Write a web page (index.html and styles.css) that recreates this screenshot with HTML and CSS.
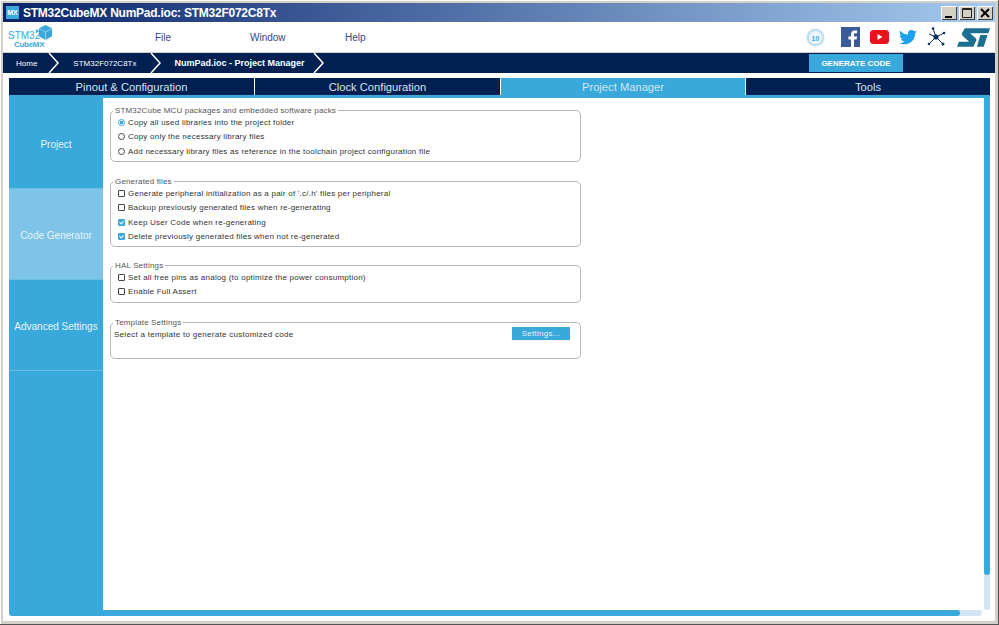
FILE: index.html
```html
<!DOCTYPE html>
<html>

  <head>
    <meta charset="UTF-8">
    <title>STM32CubeMX NumPad.ioc: STM32F072C8Tx</title>
    <link rel="stylesheet" href="styles.css">
  </head>

  <body>
    <div class="window">
      <div class="titleBar">
        <span class="appIcon">MX</span>
        <span class="titleText">STM32CubeMX NumPad.ioc: STM32F072C8Tx</span>
        <div class="winButtons">
          <span class="winBtn"><svg width="16" height="14"><rect x="4" y="10" width="7" height="2" fill="#000"/></svg></span>
          <span class="winBtn"><svg width="16" height="14"><path d="M3.5 2.5h9v9h-9z M3.5 3.5h9" fill="none" stroke="#222"/></svg></span>
          <span class="winBtn winClose"><svg width="16" height="14"><path d="M4 3l8 8M12 3l-8 8" stroke="#000" stroke-width="2"/></svg></span>
        </div>
      </div>

      <div class="menuBar">
        <div class="logo">
          <div class="logoText"><span class="logoStm">STM32</span><span class="logoCube">CubeMX</span></div>
          <svg class="logoIcon" width="15" height="17" viewBox="0 0 16 18">
            <path d="M8 1l7 3.500v8.500l-7 4-7-4v-8.500z" fill="#3aa8dc"/>
            <path d="M1 4.500l7 4 7-4M8 8.500v8.500" fill="none" stroke="#bfe3f5" stroke-width=".7"/>
            <path d="M-4 7l2-.5 1-1.500.5 1.500 1.500.5-1.500.5-.5 1.500-1-1.500z" fill="#3aa8dc"/>
          </svg>
        </div>
        <div class="menus">
          <span class="menuItem">File</span>
          <span class="menuItem">Window</span>
          <span class="menuItem">Help</span>
        </div>
        <div class="social">
          <svg class="badge" width="19" height="19" viewBox="0 0 19 19">
            <circle cx="9.500" cy="9.500" r="9" fill="#bfe0f3"/>
            <circle cx="9.500" cy="9.500" r="6.500" fill="#eef7fc"/>
            <text x="9.500" y="12.500" class="badgeText" text-anchor="middle">10</text>
          </svg>
          <svg width="19" height="20" viewBox="0 0 19 20">
            <rect width="19" height="20" fill="#3b5a9b"/>
            <path d="M13 20v-7.500h2.600l.4-3h-3v-1.800c0-.9.3-1.400 1.500-1.400h1.600v-2.700c-.4 0-1.300-.1-2.300-.1-2.300 0-3.800 1.400-3.800 3.900v2.100h-2.600v3h2.600v7.500z" fill="#fff"/>
          </svg>
          <svg width="19" height="14" viewBox="0 0 19 14">
            <rect width="19" height="14" rx="3.500" fill="#e8121c"/>
            <path d="M7.500 4l5 3-5 3z" fill="#fff"/>
          </svg>
          <svg width="18" height="15" viewBox="0 0 24 20">
            <path d="M24 2.400c-.9.400-1.800.7-2.800.8 1-.6 1.800-1.600 2.200-2.700-1 .6-2 1-3.100 1.200C19.300.700 18 0 16.600 0c-2.700 0-4.900 2.200-4.900 4.900 0 .4 0 .8.100 1.100C7.700 5.800 4.100 3.900 1.700.900c-.4.700-.7 1.600-.7 2.500 0 1.700.9 3.200 2.200 4.100-.8 0-1.600-.2-2.200-.6v.1c0 2.400 1.700 4.400 3.900 4.800-.7.200-1.500.2-2.200.1.600 2 2.400 3.400 4.600 3.400-1.700 1.300-3.800 2.100-6.100 2.100-.4 0-.8 0-1.200-.1C2.200 18.300 4.800 19 7.500 19c9.100 0 14-7.500 14-14v-.6c1-.7 1.800-1.600 2.500-2z" fill="#1da1e8"/>
          </svg>
          <svg width="19" height="20" viewBox="0 0 19 20">
            <path d="M9 10L6 1.500M9 10l8-4M9 10l7 7M9 10l-7 7M9 10l-7-3" stroke="#0b2f5b" stroke-width="1"/>
            <circle cx="9" cy="10" r="2.600" fill="#0b2f5b"/>
            <circle cx="6" cy="1.500" r="1.300" fill="#0b2f5b"/>
            <circle cx="17" cy="6" r="1.300" fill="#0b2f5b"/>
            <circle cx="16" cy="17" r="1.500" fill="#0b2f5b"/>
            <circle cx="2" cy="17" r="1.300" fill="#0b2f5b"/>
          </svg>
          <svg class="stLogo" width="33" height="19" viewBox="0 0 34 19">
            <path d="M8 0H34L32.400 5H13.500L19.500 10.500C20.500 11.500 20 13 19 14.500L17 19H0L2 14H12.500L6 8C4.500 6.500 5 5 6 3.500Z" fill="#1d6f92"/>
            <path d="M24 7H31.500L27.500 19H20.500Z" fill="#1d6f92"/>
          </svg>
        </div>
      </div>

      <div class="crumbBar">
        <span class="crumb crumbHome">Home</span>
        <svg class="chevron" width="12" height="20"><path d="M1 0l9 10-9 10" fill="none" stroke="#fff" stroke-width="1.500"/></svg>
        <span class="crumb crumbChip">STM32F072C8Tx</span>
        <svg class="chevron chevronMid" width="12" height="20"><path d="M1 0l9 10-9 10" fill="none" stroke="#fff" stroke-width="1.500"/></svg>
        <span class="crumb crumbCurrent">NumPad.ioc - Project Manager</span>
        <svg class="chevron chevronLast" width="12" height="20"><path d="M1 0l9 10-9 10" fill="none" stroke="#fff" stroke-width="1.500"/></svg>
        <button type="button" class="generateBtn">GENERATE CODE</button>
      </div>

      <div class="main">
        <div class="tabs">
          <div class="tab">Pinout &amp; Configuration</div>
          <div class="tab">Clock Configuration</div>
          <div class="tab tabActive">Project Manager</div>
          <div class="tab">Tools</div>
        </div>

        <div class="workspace">
          <div class="sidebar">
            <div class="sideItem">Project</div>
            <div class="sideItem sideActive">Code Generator</div>
            <div class="sideItem">Advanced Settings</div>
          </div>

          <div class="panel">
            <fieldset class="group groupPacks">
              <legend>STM32Cube MCU packages and embedded software packs</legend>
              <div class="opt"><span class="radio radioOn"></span>Copy all used libraries into the project folder</div>
              <div class="opt"><span class="radio"></span>Copy only the necessary library files</div>
              <div class="opt"><span class="radio"></span>Add necessary library files as reference in the toolchain project configuration file</div>
            </fieldset>

            <fieldset class="group groupFiles">
              <legend>Generated files</legend>
              <div class="opt"><span class="check"></span>Generate peripheral initialization as a pair of '.c/.h' files per peripheral</div>
              <div class="opt"><span class="check"></span>Backup previously generated files when re-generating</div>
              <div class="opt"><span class="check checkOn"></span>Keep User Code when re-generating</div>
              <div class="opt"><span class="check checkOn"></span>Delete previously generated files when not re-generated</div>
            </fieldset>

            <fieldset class="group groupHal">
              <legend>HAL Settings</legend>
              <div class="opt"><span class="check"></span>Set all free pins as analog (to optimize the power consumption)</div>
              <div class="opt"><span class="check"></span>Enable Full Assert</div>
            </fieldset>

            <fieldset class="group groupTemplate">
              <legend>Template Settings</legend>
              <div class="templateRow">
                <span class="templateText">Select a template to generate customized code</span>
                <button type="button" class="settingsBtn">Settings...</button>
              </div>
            </fieldset>
          </div>

          <div class="vScroll"><div class="vThumb"></div></div>
          <div class="hScroll"><div class="hThumb"></div></div>
        </div>
      </div>
    </div>
  </body>

</html>
```

FILE: styles.css
```css
html, body {
    margin: 0;
    padding: 0;
}
body {
    width: 999px;
    height: 625px;
    overflow: hidden;
    font-family: "Liberation Sans", Arial, sans-serif;
}
.window {
    box-sizing: border-box;
    width: 999px;
    height: 625px;
    display: flex;
    flex-direction: column;
    padding: 3px 3px 3px 3px;
    background-color: #d4d0c8;
    border-right: 1px solid #555;
    border-bottom: 1px solid #555;
    box-shadow: inset 1px 1px 0 #fff;
}

/* title bar */
.titleBar {
    height: 19px;
    flex: none;
    display: flex;
    align-items: center;
    padding: 0 2px 0 3px;
    background: linear-gradient(to right, #0a246a, #a6caf0);
}
.appIcon {
    width: 13px;
    height: 13px;
    margin-right: 4px;
    background-color: #3aa8dc;
    color: #fff;
    font-size: 7px;
    font-weight: bold;
    line-height: 13px;
    text-align: center;
}
.titleText {
    color: #fff;
    font-size: 12px;
    font-weight: bold;
    letter-spacing: -.24px;
}
.winButtons {
    margin-left: auto;
    display: flex;
    gap: 2px;
}
.winBtn {
    box-sizing: border-box;
    width: 16px;
    height: 14px;
    display: block;
    background-color: #d4d0c8;
    box-shadow: inset 1px 1px 0 #fff, inset -1px -1px 0 #404040;
}
.winBtn svg {
    display: block;
}

/* logo, menus and social icons */
.menuBar {
    height: 30px;
    flex: none;
    display: flex;
    align-items: center;
    background-color: #fff;
}
.logo {
    width: 48px;
    margin-left: 5px;
    align-self: flex-start;
    padding-top: 2px;
    display: flex;
    align-items: flex-start;
}
.logoText {
    display: flex;
    flex-direction: column;
    align-items: flex-start;
    width: 36px;
    flex: none;
    color: #3aa8dc;
    line-height: 9px;
    margin-top: 7px;
}
.logoStm {
    font-size: 10px;
}
.logoCube {
    margin-left: 6px;
    font-size: 8px;
    font-weight: bold;
    letter-spacing: -.3px;
}
.logoIcon {
    margin-left: -6px;
    flex: none;
    overflow: visible;
}
.menus {
    display: flex;
    margin-left: 99px;
}
.menuItem {
    width: 95px;
    color: #33467f;
    font-size: 10px;
}
.social {
    margin-left: auto;
    margin-right: 5px;
    display: flex;
    align-items: center;
    gap: 10px;
}
.badge {
    margin-right: 6px;
}
.stLogo {
    margin-left: 1px;
}
.badgeText {
    fill: #3aa8dc;
    font-size: 7px;
    font-weight: bold;
}

/* breadcrumb */
.crumbBar {
    height: 20px;
    flex: none;
    display: flex;
    align-items: center;
    margin-top: 1px;
    background-color: #002052;
}
.crumb {
    color: #fff;
    font-size: 8px;
}
.crumbHome {
    margin-left: 13px;
}
.crumbChip {
    margin-left: 13px;
}
.crumbCurrent {
    margin-left: 12px;
    font-size: 9px;
    font-weight: bold;
}
.chevron {
    margin-left: 11px;
    flex: none;
}
.chevronMid {
    margin-left: 14px;
}
.chevronLast {
    margin-left: 8px;
}
.generateBtn {
    width: 94px;
    height: 18px;
    margin-left: auto;
    margin-right: 92px;
    padding: 0;
    border: none;
    background-color: #39a9dc;
    color: #fff;
    font-family: inherit;
    font-size: 8px;
    font-weight: bold;
}

/* main */
.main {
    flex: 1;
    min-height: 0;
    display: flex;
    flex-direction: column;
    padding: 5px 5px 5px 6px;
    background-color: #fff;
}
.tabs {
    height: 17px;
    flex: none;
    display: grid;
    grid-template-columns: 246px 246px 245px 1fr;
    background-color: #002052;
}
.tab {
    height: 17px;
    color: #d4e4f0;
    font-size: 11.200px;
    line-height: 19px;
    text-align: center;
    border-right: 1px solid #fff;
}
.tab:last-child {
    border-right: none;
}
.tabActive {
    background-color: #39a9dc;
}
.workspace {
    flex: 1;
    min-height: 0;
    display: grid;
    grid-template-columns: 94px 1fr 7px;
    grid-template-rows: 1fr 6px;
    border-top: 3px solid #39a9dc;
}
.sidebar {
    grid-row: 1 / span 2;
    display: flex;
    flex-direction: column;
    background-color: #39a9dc;
    border-bottom-left-radius: 3px;
}
.sideItem {
    box-sizing: border-box;
    height: 91px;
    flex: none;
    display: flex;
    align-items: center;
    justify-content: center;
    padding-top: 3px;
    color: #e6f4fb;
    font-size: 10px;
    border-bottom: 1px solid #6cc0e6;
}
.sideActive {
    background-color: #7dc4e8;
}

/* project manager panel */
.panel {
    min-width: 0;
    padding: 8px 0 0 7px;
    background-color: #fff;
}
.group {
    box-sizing: border-box;
    width: 471px;
    margin: 0 0 15px 0;
    padding: 0 3px;
    border: 1px solid #b4b8bd;
    border-radius: 5px;
}
.group legend {
    margin-left: -1px;
    padding: 0 2px;
    color: #555;
    font-size: 8px;
    letter-spacing: .16px;
    line-height: 9px;
}
.groupPacks {
    height: 56px;
}
.groupFiles {
    height: 70px;
    margin-bottom: 14px;
}
.groupHal {
    height: 42px;
}
.groupTemplate {
    height: 41px;
}
.opt {
    box-sizing: border-box;
    height: 14.300px;
    display: flex;
    align-items: center;
    padding: 1px 0 0 4px;
    color: #333;
    font-size: 8px;
    letter-spacing: .23px;
}
.radio, .check {
    box-sizing: border-box;
    position: relative;
    width: 7px;
    height: 7px;
    flex: none;
    margin-right: 3px;
    background-color: #fff;
    border: 1px solid #444;
}
.radio {
    border-radius: 50%;
}
.radioOn {
    border: 1px solid #39a9dc;
    background: radial-gradient(circle, #39a9dc 45%, #fff 55%);
}
.check {
    border-radius: 1px;
}
.checkOn {
    background-color: #39a9dc;
    border-color: #39a9dc;
}
.checkOn::after {
    content: "";
    position: absolute;
    top: 0;
    left: 1px;
    width: 2px;
    height: 3px;
    border-right: 1px solid #fff;
    border-bottom: 1px solid #fff;
    transform: rotate(45deg);
}
.templateRow {
    display: flex;
    align-items: center;
    justify-content: space-between;
    padding-right: 7px;
    color: #333;
    font-size: 8px;
    letter-spacing: .28px;
}
.templateText {
    margin-top: 2px;
}
.settingsBtn {
    width: 58px;
    height: 13px;
    padding: 0;
    border: none;
    background-color: #39a9dc;
    color: #e6f4fb;
    font-family: inherit;
    font-size: 8px;
    letter-spacing: .28px;
}

/* scrollbars */
.vScroll {
    grid-column: 3;
    grid-row: 1;
    margin-left: 1px;
    background-color: #d3e5f3;
    border-radius: 0 0 3px 3px;
}
.vThumb {
    height: 477px;
    background-color: #39a9dc;
    border-radius: 0 0 3px 3px;
}
.hScroll {
    grid-column: 2;
    grid-row: 2;
    margin-right: 1px;
    background-color: #d3e5f3;
    border-radius: 0 3px 3px 0;
}
.hThumb {
    width: 857px;
    height: 6px;
    background-color: #39a9dc;
    border-radius: 0 3px 3px 0;
}
```
